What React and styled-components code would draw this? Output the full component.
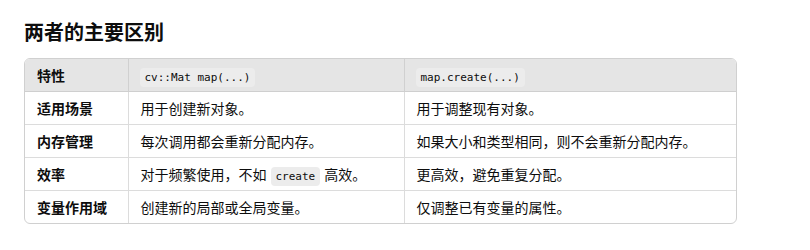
import styled, { createGlobalStyle } from "styled-components";

const GlobalStyle = createGlobalStyle`
  body {
    margin: 0;
    background: #ffffff;
    color: #0d0d0d;
    font-family: "Noto Sans CJK SC", "Noto Sans", sans-serif;
  }
`;

const Page = styled.div`
  padding: 18px 24px;
`;

const Title = styled.h3`
  margin: 0 0 12px;
  font-size: 20px;
  font-weight: 700;
  line-height: 28px;
`;

const TableWrap = styled.div`
  width: 711px;
  border: 1px solid #d0d0d0;
  border-radius: 6px;
  overflow: hidden;
`;

const Table = styled.table`
  width: 100%;
  border-collapse: collapse;
  table-layout: fixed;
  font-size: 14px;
`;

const Head = styled.th`
  background: #e5e5e5;
  text-align: left;
  font-weight: ${(p) => (p.$bold ? 700 : 400)};
  height: 32px;
  padding: 0 12px;
  border-bottom: 1px solid #cfcfcf;
  border-left: ${(p) => (p.$first ? "none" : "1px solid #d0d0d0")};
`;

const Cell = styled.td`
  height: 32px;
  padding: 0 12px;
  font-weight: ${(p) => (p.$bold ? 700 : 400)};
  border-top: ${(p) => (p.$top ? "1px solid #dcdcdc" : "none")};
  border-left: ${(p) => (p.$first ? "none" : "1px solid #dcdcdc")};
  white-space: nowrap;
`;

const Code = styled.code`
  font-family: "DejaVu Sans Mono", "Liberation Mono", monospace;
  font-size: 11px;
  background: ${(p) => (p.$head ? "#ececec" : "#ececec")};
  border-radius: 4px;
  padding: 3px 5px;
  margin: ${(p) => (p.$inline ? "0 4px" : "0 0 0 -1px")};
`;

const rows = [
  ["适用场景", "用于创建新对象。", "用于调整现有对象。"],
  ["内存管理", "每次调用都会重新分配内存。", "如果大小和类型相同，则不会重新分配内存。"],
  [
    "效率",
    <>
      对于频繁使用，不如<Code $inline>create</Code>高效。
    </>,
    "更高效，避免重复分配。",
  ],
  ["变量作用域", "创建新的局部或全局变量。", "仅调整已有变量的属性。"],
];

export default function App() {
  return (
    <Page>
      <GlobalStyle />
      <Title>两者的主要区别</Title>
      <TableWrap>
        <Table>
          <colgroup>
            <col style={{ width: 103 }} />
            <col style={{ width: 276 }} />
            <col />
          </colgroup>
          <thead>
            <tr>
              <Head $first $bold>特性</Head>
              <Head>
                <Code $head>cv::Mat map(...)</Code>
              </Head>
              <Head>
                <Code $head>map.create(...)</Code>
              </Head>
            </tr>
          </thead>
          <tbody>
            {rows.map((r, i) => (
              <tr key={i}>
                <Cell $first $bold $top={i > 0}>{r[0]}</Cell>
                <Cell $top={i > 0}>{r[1]}</Cell>
                <Cell $top={i > 0}>{r[2]}</Cell>
              </tr>
            ))}
          </tbody>
        </Table>
      </TableWrap>
    </Page>
  );
}
